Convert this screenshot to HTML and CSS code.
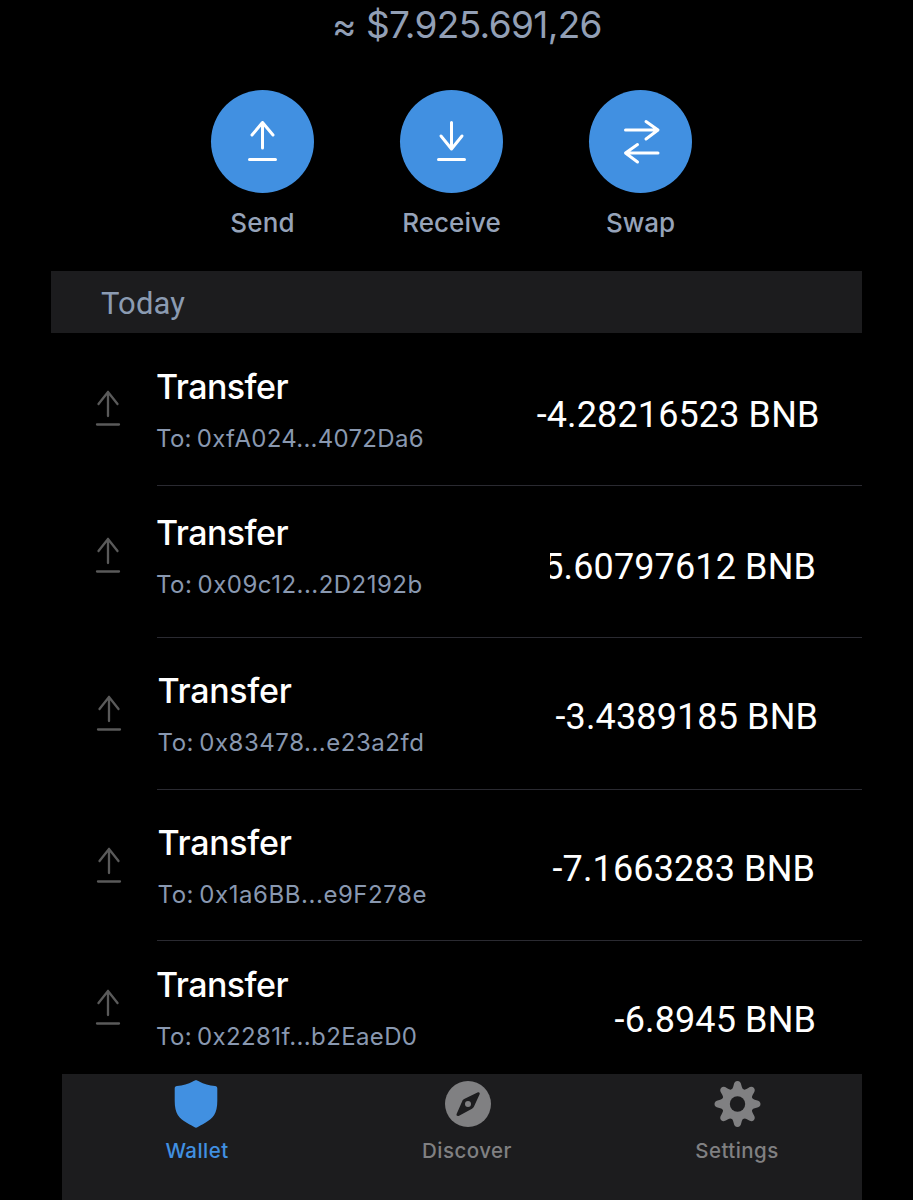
FILE: index.html
```html
<!DOCTYPE html>
<html lang="en">
<head>
<meta charset="utf-8">
<title>Wallet</title>
<link rel="stylesheet" href="styles.css">
</head>
<body>
<svg class="defs" width="0" height="0">
  <symbol id="up" viewBox="0 0 26 38"><path d="M13 27V3M3.500 15 13 3l9.500 12M2 35.500h22"/></symbol>
</svg>
<main class="screen">
  <header class="balance"><span class="approx">≈</span><span class="sum">$7.925.691,26</span></header>
  <nav class="actions">
    <a class="action"><span class="disc"><svg viewBox="0 0 103 103"><path d="M51.500 58V32.500M41 45l10.500-12.500 10.500 12.500M38.500 69.500h26"/></svg></span><span class="send">Send</span></a>
    <a class="action"><span class="disc"><svg viewBox="0 0 103 103"><path d="M51.500 32.500V58.500M41 46l10.500 13 10.500-13M38.500 69.500h26"/></svg></span><span class="receive">Receive</span></a>
    <a class="action"><span class="disc"><svg viewBox="0 0 103 103"><path d="M36.500 40H68M57 31.500 69 40l-12 9M69 63H37M48.500 54.500 36.500 63l12 9"/></svg></span><span class="swap">Swap</span></a>
  </nav>
  <h2 class="day"><span>Today</span></h2>
  <section class="list">
    <article class="row r1"><svg class="icon"><use href="#up"/></svg><div class="info"><h3>Transfer</h3><p>To: 0xfA024...4072Da6</p></div><div class="amount">-4.28216523 BNB</div></article>
    <article class="row r2"><svg class="icon"><use href="#up"/></svg><div class="info"><h3>Transfer</h3><p>To: 0x09c12...2D2192b</p></div><div class="amount clipped"><span>5.60797612 BNB</span></div></article>
    <article class="row r3"><svg class="icon"><use href="#up"/></svg><div class="info"><h3>Transfer</h3><p>To: 0x83478...e23a2fd</p></div><div class="amount">-3.4389185 BNB</div></article>
    <article class="row r4"><svg class="icon"><use href="#up"/></svg><div class="info"><h3>Transfer</h3><p>To: 0x1a6BB...e9F278e</p></div><div class="amount">-7.1663283 BNB</div></article>
    <article class="row r5"><svg class="icon"><use href="#up"/></svg><div class="info"><h3>Transfer</h3><p>To: 0x2281f...b2EaeD0</p></div><div class="amount">-6.8945 BNB</div></article>
  </section>
  <footer class="tabs">
    <a class="tab active"><svg viewBox="0 0 48 50"><path d="M23 1.300c1.200 0 2 .6 3.200 1.300 4.600 2.800 10 4 15.800 4.300 1.500.1 2.300 1 2.300 2.500v12.400c0 13-4.300 17.500-12 22-3.500 2-6 3.300-7.500 4.300-1.300.8-2.300.8-3.600 0-1.500-1-4-2.300-7.500-4.300C6 39.300 1.700 34.800 1.700 21.800V9.400c0-1.500.8-2.400 2.300-2.500 5.800-.3 11.200-1.500 15.800-4.300C21 1.900 21.800 1.300 23 1.300Z"/></svg><span>Wallet</span></a>
    <a class="tab"><svg viewBox="0 0 48 50"><circle cx="25" cy="25" r="23"/><path class="cut" d="M34.500 13.400c1.700-.7 2.800.5 2 2.100l-5.500 11.900c-.6 1.100-1 1.700-2 2.300L16.100 36.700c-1.800.8-3.200-.3-2.400-2l5.400-12.300c.5-1.200 1-1.800 2-2.400Z"/><circle cx="25" cy="25" r="3"/></svg><span>Discover</span></a>
    <a class="tab"><svg viewBox="0 0 48 50"><g><circle cx="24.500" cy="25" r="15.800"/><g id="pair"><path id="tooth" d="M17.500 11.500c1.900-1.200 2.600-3 3.200-5.500.5-2.500 1.700-4 3.800-4s3.300 1.500 3.800 4c.6 2.500 1.300 4.300 3.200 5.500Z"/><use href="#tooth" transform="rotate(90 24.500 25)"/><use href="#tooth" transform="rotate(180 24.500 25)"/><use href="#tooth" transform="rotate(270 24.500 25)"/></g><use href="#pair" transform="rotate(45 24.500 25)"/></g><circle class="cut" cx="24.500" cy="25" r="7.700"/></svg><span>Settings</span></a>
  </footer>
</main>
</body>
</html>
```
FILE: styles.css
```css
* { box-sizing: border-box; }
body { margin: 0; background: #000; font-family: Inter, "Liberation Sans", sans-serif; }
h2, h3, p { margin: 0; font-weight: 400; }
.defs { display: block; height: 0; }
.screen { width: 913px; height: 1200px; overflow: hidden; display: flex; flex-direction: column; background: #000; }
.balance { height: 89.5px; padding: 4px 0 0 332px; display: flex; gap: 12px; font-size: 37px; line-height: 42px; color: #929fb5; white-space: nowrap; flex: none; }
.approx { font-size: 37px; line-height: 43px; width: 22px; }
.sum { letter-spacing: -0.65px; }
.actions { height: 181.5px; display: flex; gap: 86px; padding-left: 211px; flex: none; }
.action { width: 103px; display: flex; flex-direction: column; align-items: center; color: #96a3b9; font-size: 26px; line-height: 32px; font-weight: 500; gap: 14px; }
.disc { width: 103px; height: 103px; border-radius: 50%; background: #4190e1; flex: none; }
.disc svg { display: block; fill: none; stroke: #fff; stroke-width: 3; stroke-linecap: round; stroke-linejoin: round; }
.send { letter-spacing: 0.2px; }
.day { width: 811px; height: 62px; margin-left: 51px; padding: 3px 0 0 50px; flex: none; background: #1c1c1e; color: #8b9bb2; font: 400 31px/59px Roboto, sans-serif; letter-spacing: 0.1px; }
.list { width: 811px; margin-left: 51px; flex: none; display: flex; flex-direction: column; }
.row { position: relative; display: flex; align-items: flex-start; height: 152px; padding-left: 44px; flex: none; }
.row:not(:last-child)::after { content: ""; position: absolute; left: 106px; right: 0; bottom: 0; height: 1px; background: #2a2a31; }
.icon { width: 26px; height: 38px; margin-top: 22.5px; flex: none; fill: none; stroke: #5a5a5a; stroke-width: 2.3; stroke-linecap: round; stroke-linejoin: round; }
.info { flex: 1; padding-left: 35px; }
.info h3 { color: #fff; font-size: 34px; line-height: 40px; font-weight: 500; letter-spacing: -0.55px; }
.info p { margin-top: 16px; color: #8998b0; font-size: 24px; line-height: 32px; white-space: nowrap; word-spacing: -2px; }
.amount { color: #fff; font: 400 36px/40px Roboto, sans-serif; white-space: nowrap; flex: none; letter-spacing: 0.12px; }
.clipped { overflow: hidden; width: 266px; display: flex; justify-content: flex-end; }
.r1 { padding-top: 33.5px; padding-right: 42.5px; height: 153px; }
.r1 .amount { margin-top: 28px; }
.r1 p { letter-spacing: 0.28px; }
.r2 { padding-top: 27px; padding-right: 46px; }
.r2 .amount { margin-top: 34px; }
.r2 p { letter-spacing: 0.48px; }
.r3 { padding-top: 33px; padding-right: 44px; }
.r3 .amount { margin-top: 26px; }
.r3 p { letter-spacing: 0.53px; }
.r3 h3, .r4 h3 { letter-spacing: -0.3px; }
.r3, .r4 { padding-left: 44.5px; }
.r3 .info, .r4 .info { padding-left: 36px; }
.r4 { height: 151px; padding-top: 33px; padding-right: 47px; }
.r4 .amount { margin-top: 26px; }
.r4 p { letter-spacing: 0.55px; }
.r5 { height: 133px; padding-top: 24px; padding-right: 46px; }
.r5 .amount { margin-top: 35px; }
.r5 p { letter-spacing: 0.36px; }
.tabs { width: 800px; height: 126px; margin-left: 62px; padding-top: 5px; display: flex; background: #1c1c1e; flex: none; }
.tab { width: 270px; flex: none; display: flex; flex-direction: column; align-items: center; gap: 8px; color: #808082; fill: #808082; font-size: 20.5px; line-height: 28px; font-weight: 500; letter-spacing: 0.45px; }
.tab:last-child { width: 260px; padding-left: 10px; box-sizing: content-box; margin-left: -5px; }
.tab svg { width: 48px; height: 50px; }
.active { color: #4190e1; fill: #4190e1; }
.cut { fill: #1c1c1e; }
```
